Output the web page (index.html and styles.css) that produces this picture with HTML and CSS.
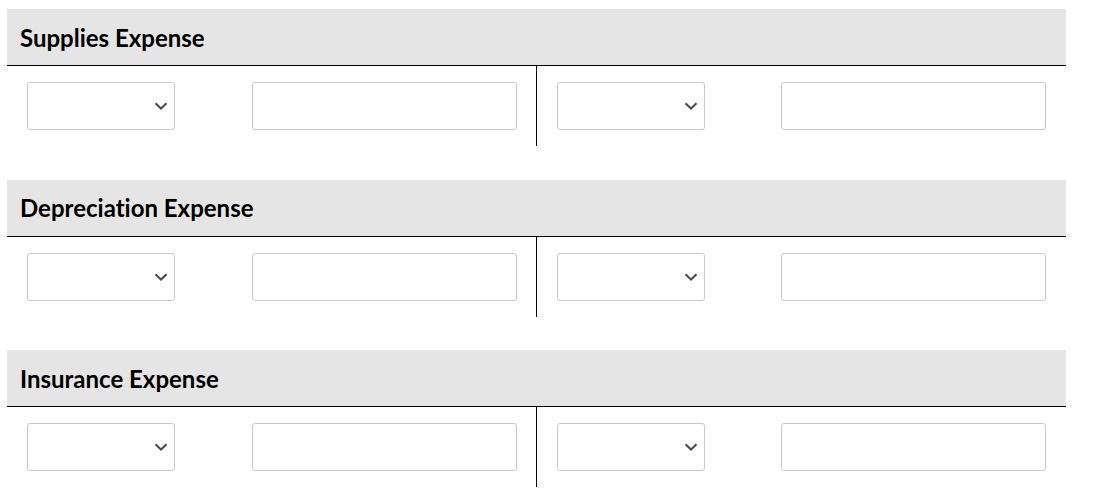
FILE: index.html
```html
<!DOCTYPE html>
<html lang="en">
<head>
    <meta charset="UTF-8">
    <meta name="viewport" content="width=device-width, initial-scale=1.0">
    <title>Adjusting Entries</title>
    <link rel="stylesheet" href="styles.css">
</head>
<body>
    <div class="sheet">
        <section class="account">
            <h2 class="account-title">Supplies Expense</h2>
            <div class="t-row">
                <div class="t-side t-debit">
                    <span class="select-wrap">
                        <select class="t-select" aria-label="Supplies Expense debit entry"><option></option></select>
                        <svg class="chevron" width="14" height="8" viewBox="0 0 14 8"><path d="M1.5 1.2 L7 6.5 L12.5 1.2" fill="none" stroke="#4a4a4a" stroke-width="2"/></svg>
                    </span>
                    <input class="t-amount" type="text" aria-label="Supplies Expense debit amount">
                </div>
                <div class="t-side">
                    <span class="select-wrap">
                        <select class="t-select" aria-label="Supplies Expense credit entry"><option></option></select>
                        <svg class="chevron" width="14" height="8" viewBox="0 0 14 8"><path d="M1.5 1.2 L7 6.5 L12.5 1.2" fill="none" stroke="#4a4a4a" stroke-width="2"/></svg>
                    </span>
                    <input class="t-amount" type="text" aria-label="Supplies Expense credit amount">
                </div>
            </div>
        </section>

        <section class="account">
            <h2 class="account-title">Depreciation Expense</h2>
            <div class="t-row">
                <div class="t-side t-debit">
                    <span class="select-wrap">
                        <select class="t-select" aria-label="Depreciation Expense debit entry"><option></option></select>
                        <svg class="chevron" width="14" height="8" viewBox="0 0 14 8"><path d="M1.5 1.2 L7 6.5 L12.5 1.2" fill="none" stroke="#4a4a4a" stroke-width="2"/></svg>
                    </span>
                    <input class="t-amount" type="text" aria-label="Depreciation Expense debit amount">
                </div>
                <div class="t-side">
                    <span class="select-wrap">
                        <select class="t-select" aria-label="Depreciation Expense credit entry"><option></option></select>
                        <svg class="chevron" width="14" height="8" viewBox="0 0 14 8"><path d="M1.5 1.2 L7 6.5 L12.5 1.2" fill="none" stroke="#4a4a4a" stroke-width="2"/></svg>
                    </span>
                    <input class="t-amount" type="text" aria-label="Depreciation Expense credit amount">
                </div>
            </div>
        </section>

        <section class="account">
            <h2 class="account-title">Insurance Expense</h2>
            <div class="t-row">
                <div class="t-side t-debit">
                    <span class="select-wrap">
                        <select class="t-select" aria-label="Insurance Expense debit entry"><option></option></select>
                        <svg class="chevron" width="14" height="8" viewBox="0 0 14 8"><path d="M1.5 1.2 L7 6.5 L12.5 1.2" fill="none" stroke="#4a4a4a" stroke-width="2"/></svg>
                    </span>
                    <input class="t-amount" type="text" aria-label="Insurance Expense debit amount">
                </div>
                <div class="t-side">
                    <span class="select-wrap">
                        <select class="t-select" aria-label="Insurance Expense credit entry"><option></option></select>
                        <svg class="chevron" width="14" height="8" viewBox="0 0 14 8"><path d="M1.5 1.2 L7 6.5 L12.5 1.2" fill="none" stroke="#4a4a4a" stroke-width="2"/></svg>
                    </span>
                    <input class="t-amount" type="text" aria-label="Insurance Expense credit amount">
                </div>
            </div>
        </section>
    </div>
</body>
</html>
```

FILE: styles.css
```css
body {
    margin: 0;
    font-family: Lato, "Liberation Sans", sans-serif;
    color: #000;
    background: #fff;
}
.sheet {
    margin: 9px 27px 0 7px;
}
.account {
    margin-bottom: 33.5px;
}
.account-title {
    margin: 0;
    height: 56px;
    display: flex;
    align-items: center;
    padding-left: 13px;
    background-color: #e5e5e5;
    border-bottom: 1px solid #000;
    font-size: 24px;
    font-weight: 700;
    font-variant-ligatures: none;
}
.t-row {
    display: grid;
    grid-template-columns: 1fr 1fr;
}
.t-side {
    display: flex;
    justify-content: space-between;
    align-items: center;
    padding: 16px 20px;
}
.t-debit {
    padding-right: 19px;
    border-right: 1px solid #000;
}
.select-wrap {
    position: relative;
    display: block;
    width: 148px;
    height: 48px;
}
.t-select {
    appearance: none;
    -webkit-appearance: none;
    width: 100%;
    height: 100%;
    box-sizing: border-box;
    border: 1px solid #c9c9c9;
    border-radius: 3px;
    background: #fff;
    margin: 0;
}
.chevron {
    position: absolute;
    right: 7px;
    top: 20px;
    pointer-events: none;
}
.t-amount {
    width: 265px;
    height: 48px;
    box-sizing: border-box;
    border: 1px solid #c9c9c9;
    border-radius: 3px;
    margin: 0;
    padding: 0 8px;
}
```
